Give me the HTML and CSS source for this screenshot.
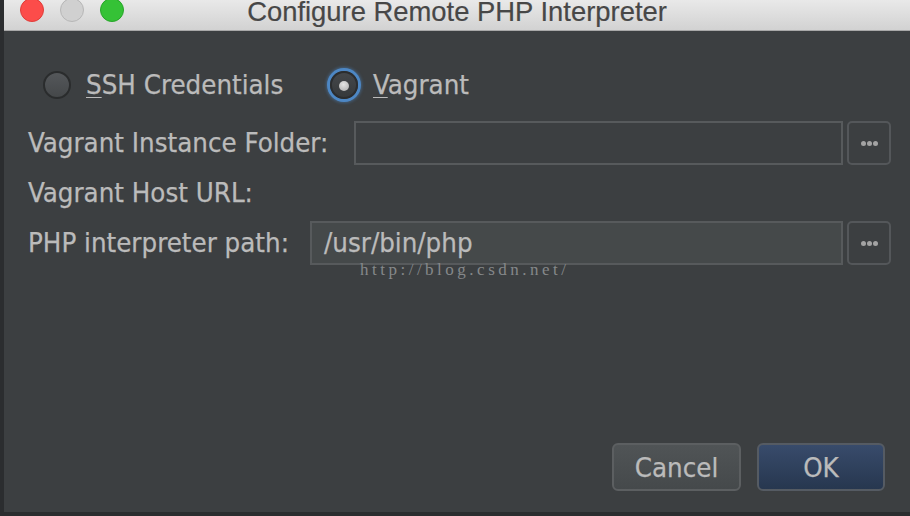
FILE: index.html
```html
<!DOCTYPE html>
<html>
<head>
<meta charset="utf-8">
<link rel="stylesheet" href="styles.css">
</head>
<body>
<div class="window">
  <div class="titlebar">
    <div class="lights">
      <span class="light red"></span>
      <span class="light gray"></span>
      <span class="light green"></span>
    </div>
    <div class="title">Configure Remote PHP Interpreter</div>
    <div class="spacer"></div>
  </div>
  <div class="content">
    <div class="radios">
      <div class="option option-ssh">
        <span class="radio"></span>
        <span class="opt-label"><u>S</u>SH Credentials</span>
      </div>
      <div class="option">
        <span class="radio selected"><span class="dot"></span></span>
        <span class="opt-label"><u>V</u>agrant</span>
      </div>
    </div>
    <div class="row">
      <span class="label label-folder">Vagrant Instance Folder:</span>
      <div class="field"></div>
      <div class="browse"><span></span><span></span><span></span></div>
    </div>
    <div class="row">
      <span class="label">Vagrant Host URL:</span>
    </div>
    <div class="row row-path">
      <span class="label label-path">PHP interpreter path:</span>
      <div class="field filled">/usr/bin/php</div>
      <div class="browse"><span></span><span></span><span></span></div>
      <span class="watermark">http://blog.csdn.net/</span>
    </div>
  </div>
  <div class="footer">
    <button class="btn btn-cancel">Cancel</button>
    <button class="btn btn-ok">OK</button>
  </div>
</div>
</body>
</html>
```

FILE: styles.css
```css
html, body {
  margin: 0;
  padding: 0;
}
body {
  width: 910px;
  height: 516px;
  overflow: hidden;
  background: #2b2d2f;
  font-family: "DejaVu Sans Condensed", "DejaVu Sans", sans-serif;
  font-stretch: condensed;
}
.window {
  margin-left: 4px;
  width: 906px;
  height: 512px;
  background: #3c3f41;
  display: flex;
  flex-direction: column;
}
.titlebar {
  height: 30px;
  flex: none;
  border-bottom: 1px solid #a8a8a8;
  background: linear-gradient(#e9e9e9, #d2d2d2);
  display: grid;
  grid-template-columns: 1fr auto 1fr;
}
.lights {
  display: flex;
  gap: 16px;
  margin-top: -2px;
  padding-left: 16px;
}
.light {
  width: 24px;
  height: 24px;
  border-radius: 50%;
  box-sizing: border-box;
}
.light.red { background: #fc4c4a; border: 1px solid #df3d39; }
.light.gray { background: #d0d0d0; border: 1px solid #b7b7b7; }
.light.green { background: #35c236; border: 1px solid #28a52a; }
.title {
  font-family: "Liberation Sans", Arial, sans-serif;
  font-stretch: normal;
  font-size: 27.4px;
  line-height: 24px;
  color: #474747;
  white-space: nowrap;
  -webkit-text-stroke: 0.2px #474747;
}
.content {
  padding: 34px 19px 0 24px;
  display: flex;
  flex-direction: column;
  gap: 6px;
  color: #bbbbbb;
  font-size: 27.4px;
  line-height: 32px;
  -webkit-text-stroke: 0.25px #bbbbbb;
}
.radios {
  display: flex;
  align-items: center;
  height: 40px;
  margin-bottom: 10px;
}
.option {
  display: flex;
  align-items: center;
  gap: 15px;
}
.option-ssh {
  width: 287px;
  margin-left: 15px;
}
.opt-label u {
  text-decoration-thickness: 1px;
  text-underline-offset: 3px;
}
.radio {
  width: 28px;
  height: 28px;
  box-sizing: border-box;
  border-radius: 50%;
  border: 2px solid #2a2c2d;
  background: linear-gradient(#54575a, #45484a);
  display: flex;
  align-items: center;
  justify-content: center;
  flex: none;
}
.radio.selected {
  background: linear-gradient(#44474a, #36393b);
  border: 2px solid #2b2d2f;
  box-shadow: 0 0 0 3px #4d87c4, 0 0 3px 4px rgba(77, 135, 196, 0.45);
}
.dot {
  width: 10px;
  height: 10px;
  border-radius: 50%;
  background: radial-gradient(circle at 45% 35%, #e4e4e4, #a9a9a9);
  margin-top: 1px;
}
.row {
  display: flex;
  align-items: center;
  height: 44px;
}
.row-path {
  position: relative;
}
.label {
  flex: none;
  white-space: nowrap;
}
.label-folder { width: 326px; }
.label-path { width: 282px; }
.field {
  flex: 1;
  height: 44px;
  box-sizing: border-box;
  border: 2px solid #575a5c;
  background: #3c3f41;
  padding-left: 12px;
  display: flex;
  align-items: center;
}
.field.filled {
  background: #45494a;
}
.browse {
  flex: none;
  width: 44px;
  height: 44px;
  margin-left: 4px;
  box-sizing: border-box;
  border: 2px solid #54575a;
  border-radius: 5px;
  background: #3c3f41;
  display: flex;
  align-items: center;
  justify-content: center;
  gap: 1px;
}
.browse span {
  width: 5px;
  height: 5px;
  border-radius: 50%;
  background: #a3a3a3;
}
.watermark {
  position: absolute;
  left: 332px;
  top: 40px;
  font-family: "Liberation Serif", "Times New Roman", serif;
  font-stretch: normal;
  font-size: 17px;
  line-height: 17px;
  letter-spacing: 3.5px;
  color: #85888a;
  white-space: nowrap;
  -webkit-text-stroke: 0;
}
.footer {
  margin-top: auto;
  display: flex;
  justify-content: flex-end;
  gap: 16px;
  padding: 0 25px 21px 0;
}
.btn {
  height: 48px;
  box-sizing: border-box;
  border-radius: 6px;
  font-family: "DejaVu Sans Condensed", "DejaVu Sans", sans-serif;
  font-stretch: condensed;
  font-size: 27.4px;
  color: #bbbbbb;
  -webkit-text-stroke: 0.25px #bbbbbb;
  padding: 0;
}
.btn-cancel {
  width: 129px;
  border: 2px solid #5c5f61;
  background: linear-gradient(#505456, #45494b);
}
.btn-ok {
  width: 128px;
  border: 2px solid #555b63;
  background: linear-gradient(#384b6b, #27374f);
}
```
